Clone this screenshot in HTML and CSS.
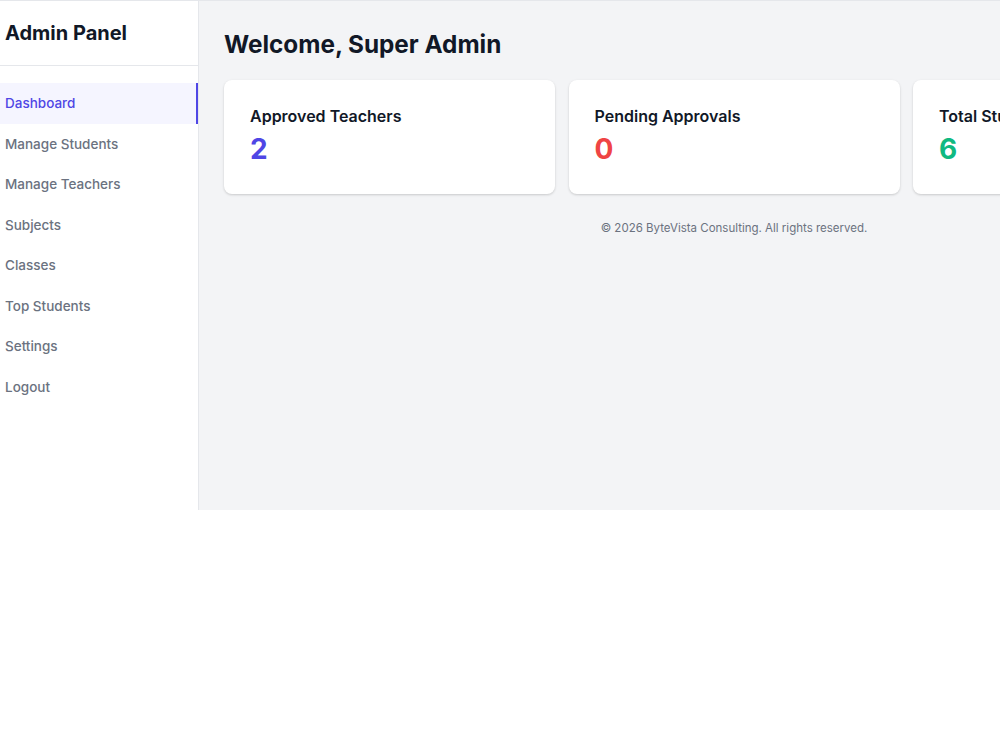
FILE: index.html
```html
<!DOCTYPE html>
<html>
<head>
  <meta charset="UTF-8" />
  <title>Admin Panel</title>
  <link rel="stylesheet" href="styles.css">
</head>
<body>
  <div class="layout">
    <aside class="sidebar">
      <div class="sidebar-header">
        <h2>Admin Panel</h2>
      </div>
      <nav class="nav">
        <a class="nav-link active" href="#">Dashboard</a>
        <a class="nav-link" href="#">Manage Students</a>
        <a class="nav-link" href="#">Manage Teachers</a>
        <a class="nav-link" href="#">Subjects</a>
        <a class="nav-link" href="#">Classes</a>
        <a class="nav-link" href="#">Top Students</a>
        <a class="nav-link" href="#">Settings</a>
        <a class="nav-link" href="#">Logout</a>
      </nav>
    </aside>
    <main class="main">
      <h1>Welcome, Super Admin</h1>
      <div class="stats">
        <div class="stat-card">
          <h3>Approved Teachers</h3>
          <p class="stat-value indigo">2</p>
        </div>
        <div class="stat-card">
          <h3>Pending Approvals</h3>
          <p class="stat-value red">0</p>
        </div>
        <div class="stat-card">
          <h3>Total Students</h3>
          <p class="stat-value green">6</p>
        </div>
      </div>
      <footer class="footer">&copy; 2026 ByteVista Consulting. All rights reserved.</footer>
    </main>
  </div>
</body>
</html>
```

FILE: styles.css
```css
body {
  margin: 0;
  font-family: Inter, "Noto Sans", sans-serif;
  background: #ffffff;
  color: #111827;
  overflow: hidden;
}
.layout {
  display: flex;
  height: 509px;
  border-top: 1px solid #e5e7eb;
}
.sidebar {
  flex: none;
  width: 198px;
  background: #ffffff;
  border-right: 1px solid #e5e7eb;
}
.sidebar-header {
  height: 64px;
  display: flex;
  align-items: center;
  padding-left: 5px;
  border-bottom: 1px solid #e5e7eb;
}
.sidebar-header h2 {
  margin: 0;
  font-size: 20px;
  font-weight: 700;
  color: #111827;
}
.nav {
  display: flex;
  flex-direction: column;
  margin-top: 17px;
}
.nav-link {
  display: block;
  padding: 10px 5px;
  font-size: 13.5px;
  line-height: 20.5px;
  font-weight: 500;
  color: #6b7280;
  text-decoration: none;
}
.nav-link.active {
  background: #f5f5ff;
  color: #4f46e5;
  border-right: 2px solid #4f46e5;
}
.main {
  flex: none;
  width: 1020px;
  padding: 22px 25px;
  background: #f3f4f6;
}
.main h1 {
  margin: 0 0 15px;
  font-size: 24.3px;
  line-height: 42px;
  font-weight: 700;
  color: #111827;
}
.stats {
  display: grid;
  grid-template-columns: repeat(3, 331px);
  gap: 13.5px;
}
.stat-card {
  background: #ffffff;
  border-radius: 8px;
  padding: 24px 26px 28px;
  box-shadow: 0 1px 3px rgba(0, 0, 0, 0.12), 0 1px 2px rgba(0, 0, 0, 0.06);
}
.stat-card h3 {
  margin: 0 0 4px;
  font-size: 16px;
  line-height: 24px;
  font-weight: 600;
}
.stat-value {
  margin: 0;
  font-size: 28px;
  line-height: 34px;
  font-weight: 700;
}
.indigo { color: #4f46e5; }
.red { color: #ef4444; }
.green { color: #10b981; }
.footer {
  margin-top: 27px;
  text-align: center;
  font-size: 11.5px;
  color: #6b7280;
}
```
